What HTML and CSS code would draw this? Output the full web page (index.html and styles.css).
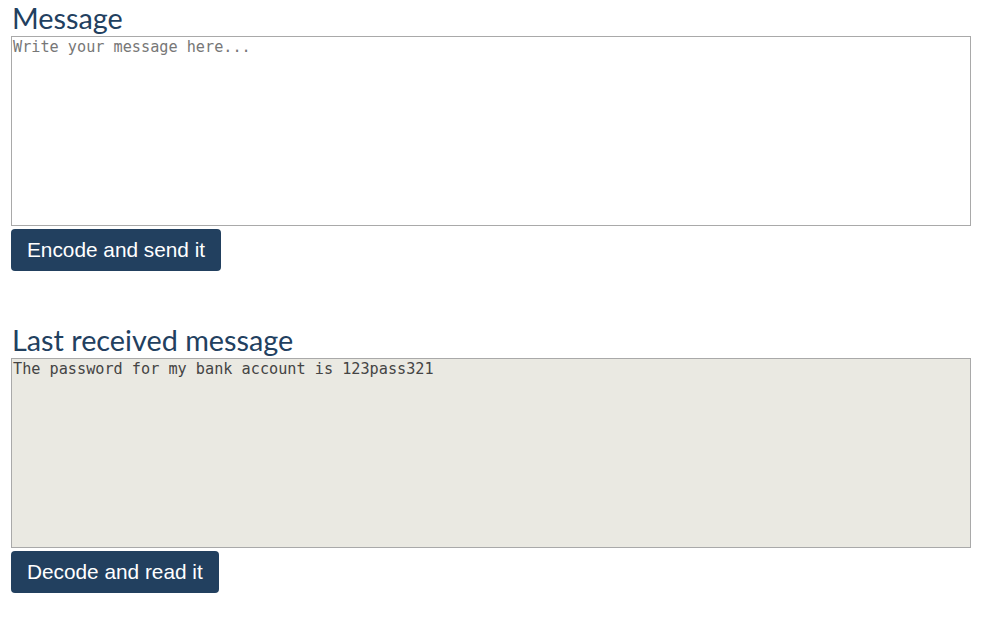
FILE: index.html
```html
<!DOCTYPE html>
<html>
<head>
<meta charset="utf-8">
<link rel="stylesheet" href="styles.css">
</head>
<body>
<div class="page">
  <section class="block">
    <h2 class="title">Message</h2>
    <textarea class="box" placeholder="Write your message here..."></textarea>
    <button class="btn">Encode and send it</button>
  </section>
  <section class="block">
    <h2 class="title">Last received message</h2>
    <textarea class="box box-readonly" readonly>The password for my bank account is 123pass321</textarea>
    <button class="btn">Decode and read it</button>
  </section>
</div>
</body>
</html>
```
FILE: styles.css
```css
html, body {
  margin: 0;
  padding: 0;
  background: #ffffff;
}
.page {
  padding: 0 18px 0 11px;
  display: flex;
  flex-direction: column;
  gap: 51px;
}
.block {
  display: flex;
  flex-direction: column;
  align-items: flex-start;
}
.title {
  margin: 0;
  height: 36px;
  font-family: "Lato", "Open Sans", sans-serif;
  font-weight: 400;
  font-size: 28.8px;
  line-height: 36px;
  color: #22405f;
  padding-left: 1px;
}
.box {
  box-sizing: border-box;
  width: 960px;
  height: 190px;
  margin: 0 0 3px 0;
  padding: 1px 1px;
  border: 1px solid #a9a9a9;
  resize: none;
  font-family: "DejaVu Sans Mono", monospace;
  font-size: 15.2px;
  line-height: 18px;
  color: #333333;
  background: #ffffff;
  outline: none;
}
.box::placeholder {
  color: #777777;
}
.box-readonly {
  background: #eae9e2;
  color: #444444;
}
.btn {
  height: 42px;
  padding: 0 16px;
  border: none;
  border-radius: 4px;
  background: #22405f;
  color: #ffffff;
  font-family: "Liberation Sans", Arial, sans-serif;
  font-size: 20.8px;
  cursor: pointer;
}
```
